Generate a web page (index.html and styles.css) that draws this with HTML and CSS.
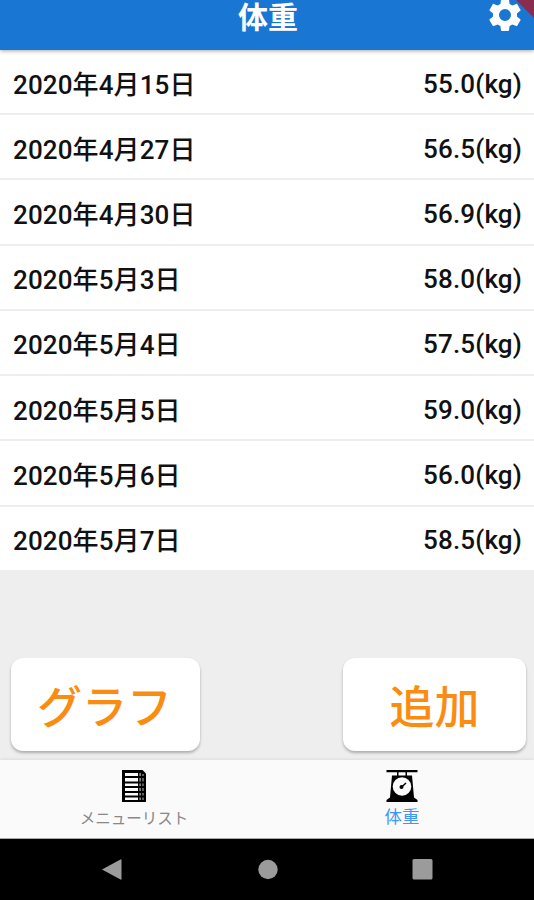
FILE: index.html
```html
<!DOCTYPE html>
<html lang="ja">
<head>
<meta charset="utf-8">
<title>体重</title>
<link rel="stylesheet" href="styles.css">
</head>
<body>
<div class="app">
  <header class="bar">
    <h1 class="title">体重</h1>
    <svg class="gear" viewBox="0 0 24 24"><path d="M19.14 12.94c.04-.3.06-.61.06-.94s-.02-.64-.07-.94l2.03-1.58c.18-.14.23-.41.12-.61l-1.92-3.32c-.12-.22-.37-.29-.59-.22l-2.39.96c-.5-.38-1.03-.7-1.62-.94l-.36-2.54c-.04-.24-.24-.41-.48-.41h-3.84c-.24 0-.43.17-.47.41l-.36 2.54c-.59.24-1.13.57-1.62.94l-2.39-.96c-.22-.08-.47 0-.59.22L2.74 8.87c-.12.21-.08.47.12.61l2.03 1.58c-.05.3-.09.63-.09.94s.02.64.07.94l-2.03 1.58c-.18.14-.23.41-.12.61l1.92 3.32c.12.22.37.29.59.22l2.39-.96c.5.38 1.03.7 1.62.94l.36 2.54c.05.24.24.41.48.41h3.84c.24 0 .44-.17.47-.41l.36-2.54c.59-.24 1.13-.56 1.62-.94l2.39.96c.22.08.47 0 .59-.22l1.92-3.32c.12-.22.07-.47-.12-.61l-2.01-1.58zM12 15.6A3.6 3.6 0 1 1 12 8.400a3.6 3.6 0 0 1 0 7.200z"/></svg>
    <span class="ribbon"></span>
  </header>
  <ul class="list">
    <li class="row"><span class="date">2020年4月15日</span><span class="kg">55.0(kg)</span></li>
    <li class="row"><span class="date">2020年4月27日</span><span class="kg">56.5(kg)</span></li>
    <li class="row"><span class="date">2020年4月30日</span><span class="kg">56.9(kg)</span></li>
    <li class="row"><span class="date">2020年5月3日</span><span class="kg">58.0(kg)</span></li>
    <li class="row"><span class="date">2020年5月4日</span><span class="kg">57.5(kg)</span></li>
    <li class="row"><span class="date">2020年5月5日</span><span class="kg">59.0(kg)</span></li>
    <li class="row"><span class="date">2020年5月6日</span><span class="kg">56.0(kg)</span></li>
    <li class="row"><span class="date">2020年5月7日</span><span class="kg">58.5(kg)</span></li>
  </ul>
  <div class="actions">
    <button class="btn graph">グラフ</button>
    <button class="btn add">追加</button>
  </div>
  <nav class="tabs">
    <a class="tab">
      <svg class="icon" viewBox="0 0 34 34"><path d="M5 1h20.500l3.500 3.500V33H5z"/><path fill="#fafafa" d="M8 4h13v3H8zM8 9h13v3.500H8zM8 14.500h13v2.500H8zM8 19h13v3H8zM8 24h13v2.500H8zM8 28.500h13V31H8z"/><path fill="#bbb" d="M22.500 4h1.200v3h-1.200zM22.500 9h1.200v3.500h-1.200zM22.500 14.500h1.200V17h-1.200zM22.500 19h1.200v3h-1.200zM22.500 24h1.200v2.500h-1.200zM22.500 28.500h1.200V31h-1.200zM25.500 5h1v2h-1zM25.500 9h1v3.500h-1zM25.500 14.500h1V17h-1zM25.500 19h1v3h-1zM25.500 24h1v2.500h-1zM25.500 28.500h1V31h-1z"/></svg>
      <span class="label">メニューリスト</span>
    </a>
    <a class="tab active">
      <svg class="icon" viewBox="0 0 34 34"><path d="M1.500 1h31v2.200h-31zM12 3h1.500v4H12zM20.500 3H22v4h-1.500zM7 6.500h20l2 22 3.500 2.500v2h-31v-2L5 28.500z"/><circle cx="17" cy="17.500" r="9.300" fill="#fafafa"/><path stroke="#000" stroke-width="1.500" d="M15.500 19l5.500-5"/><circle cx="16.500" cy="18" r="2"/></svg>
      <span class="label">体重</span>
    </a>
  </nav>
  <footer class="system">
    <svg class="keys" viewBox="0 0 534 61"><path d="M102 30.500L120.500 20.500Q121.500 20 121.500 21V40Q121.500 41 120.500 40.500z"/><circle cx="268" cy="30.500" r="9.700"/><rect x="412.500" y="20" width="20" height="20.500" rx="1.500"/></svg>
  </footer>
</div>
</body>
</html>
```

FILE: styles.css
```css
* { box-sizing: border-box; }
body { margin: 0; background: #eee; font-family: Roboto, "Noto Sans CJK JP", sans-serif; }
.app { width: 534px; height: 900px; display: flex; flex-direction: column; overflow: hidden; }
.bar { position: relative; z-index: 1; height: 50px; flex: none; display: flex; justify-content: center; background: #1976d2; box-shadow: 0 1px 4px rgba(0,0,0,.35); overflow: visible; }
.title { margin: 0; padding-left: 2px; font-size: 30px; line-height: 36px; font-weight: 700; color: #fff; }
.gear { position: absolute; left: 485px; top: -5px; width: 40px; height: 40px; fill: #fff; }
.ribbon { position: absolute; right: 0; top: 0; width: 18px; height: 18px; background: #892c50; clip-path: polygon(0 0, 100% 0, 100% 100%); }
.list { margin: 0; padding: 0; list-style: none; height: 521px; flex: none; display: grid; grid-template-rows: 65px repeat(7, 65.250px); background: #fff; overflow: hidden; }
.row { display: flex; justify-content: space-between; align-items: center; padding: 6px 12px 0 13px; border-bottom: 2px solid #eee; font-size: 26px; font-weight: 500; line-height: 38px; color: #111; letter-spacing: .12px; }
.kg { position: relative; top: -1px; letter-spacing: .15px; }
.actions { height: 189px; flex: none; display: flex; justify-content: space-between; align-items: flex-start; padding: 87px 8px 0 11px; }
.btn { height: 93px; padding: 9px 0 0; border: 0; border-radius: 12px; background: #fff; box-shadow: 0 2px 3px rgba(0,0,0,.28); color: #fb8c12; font: 500 45px/66px Roboto, "Noto Sans CJK JP", sans-serif; }
.graph { width: 189px; padding-right: 2px; }
.add { width: 183px; }
.tabs { height: 79px; flex: none; display: flex; background: #fafafa; border-bottom: 1px solid #aaa; box-shadow: 0 -1px 3px rgba(0,0,0,.07); }
.tab { flex: 1; display: flex; flex-direction: column; align-items: center; padding: 9px 0 0 2px; color: #888; }
.icon { width: 34px; height: 34px; }
.label { font-size: 15.500px; line-height: 24px; margin-top: 4px; }
.active { padding-left: 4px; color: #4295f5; }
.active .label { font-size: 17.500px; margin-top: 2px; }
.system { height: 61px; flex: none; background: #000; }
.keys { display: block; width: 534px; height: 61px; fill: #9b9b9b; }
```
